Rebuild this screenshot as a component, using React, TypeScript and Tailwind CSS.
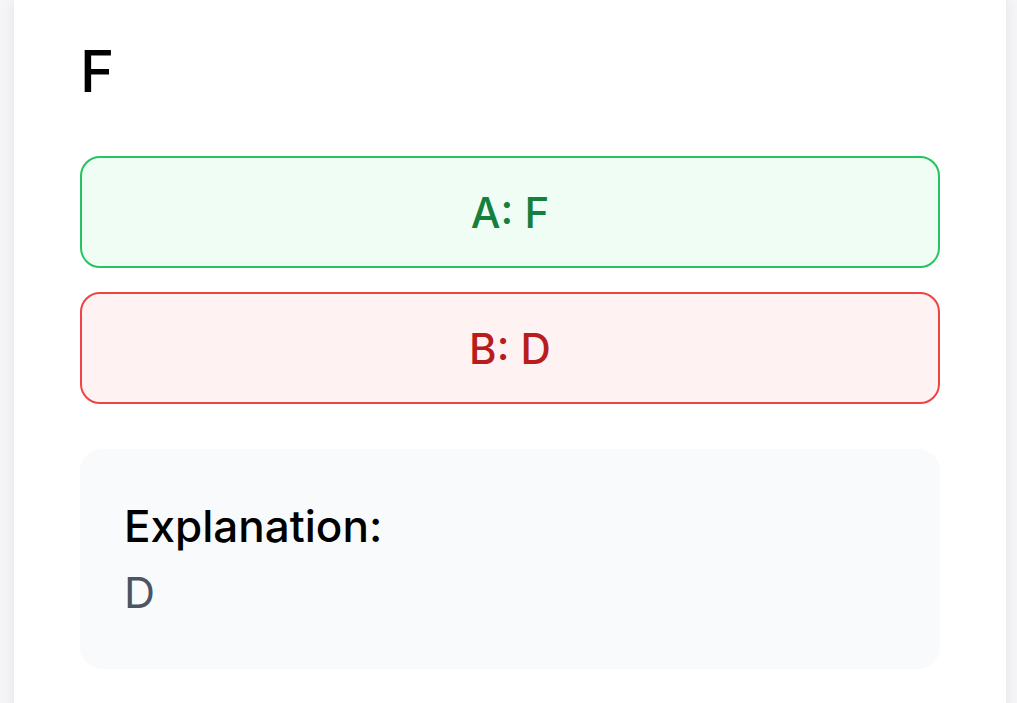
export default function App() {
  const options = [
    { label: "A: F", correct: true },
    { label: "B: D", correct: false },
  ];

  return (
    <div
      className="min-h-screen bg-[#f5f5f7] overflow-hidden"
      style={{ fontFamily: "Inter, 'Noto Sans', sans-serif" }}
    >
      <div className="ml-[14px] w-[992px] bg-white shadow-[0_0_12px_rgba(0,0,0,0.07)] px-[66px] pt-[42px] pb-[66px]">
        <h2 className="text-[58px] leading-[58px] font-medium text-black">F</h2>

        <div className="mt-[56px] flex flex-col gap-[24px]">
          {options.map((opt) => (
            <div
              key={opt.label}
              className={`h-[112px] flex items-center justify-center rounded-[20px] border-2 text-[42px] font-medium ${
                opt.correct
                  ? "bg-[#f0fdf4] border-[#22c55e] text-[#15803d]"
                  : "bg-[#fef2f2] border-[#ef4444] text-[#b91c1c]"
              }`}
            >
              {opt.label}
            </div>
          ))}
        </div>

        <div className="mt-[45px] bg-[#f9fafb] rounded-[22px] p-[44px]">
          <p className="text-[44px] leading-[66px] font-medium text-black">Explanation:</p>
          <p className="text-[43px] leading-[66px] text-[#4b5563]">D</p>
        </div>
      </div>
    </div>
  );
}
